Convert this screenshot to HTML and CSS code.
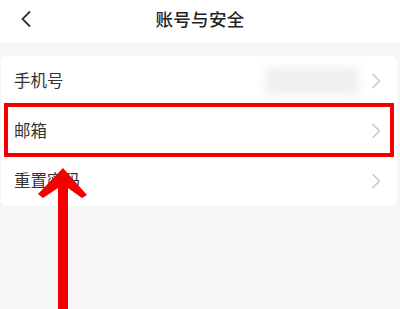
FILE: index.html
```html
<!DOCTYPE html>
<html lang="zh-CN">
<head>
    <meta charset="UTF-8">
    <meta name="viewport" content="width=device-width, initial-scale=1.0">
    <title>账号与安全</title>
    <link rel="stylesheet" href="styles.css">
</head>
<body>
    <div class="header">
        <svg class="back" width="14" height="18" viewBox="0 0 14 18">
            <path d="M11 1.5 L3.5 9 L11 16.5" fill="none" stroke="#333" stroke-width="1.8"/>
        </svg>
        <div class="title">账号与安全</div>
    </div>
    <div class="gap"></div>
    <div class="card">
        <div class="row">
            <span class="label">手机号</span>
            <div class="value">
                <div class="blurred"></div>
                <svg class="arrow-right" width="10" height="16" viewBox="0 0 10 16">
                    <path d="M1.5 1 L8.5 8 L1.5 15" fill="none" stroke="#c4c4c4" stroke-width="1.4"/>
                </svg>
            </div>
        </div>
        <div class="row">
            <span class="label">邮箱</span>
            <div class="value">
                <svg class="arrow-right" width="10" height="16" viewBox="0 0 10 16">
                    <path d="M1.5 1 L8.5 8 L1.5 15" fill="none" stroke="#c4c4c4" stroke-width="1.4"/>
                </svg>
            </div>
        </div>
        <div class="row">
            <span class="label">重置密码</span>
            <div class="value">
                <svg class="arrow-right" width="10" height="16" viewBox="0 0 10 16">
                    <path d="M1.5 1 L8.5 8 L1.5 15" fill="none" stroke="#c4c4c4" stroke-width="1.4"/>
                </svg>
            </div>
        </div>
    </div>

    <!-- annotation overlays -->
    <div class="highlight"></div>
    <svg class="pointer" width="60" height="145" viewBox="0 0 60 145">
        <path d="M33 0 L57 27 L52 30 L38 20 L38 145 L28 145 L28 20 L13 30 L8 26 Z" fill="#f40000"/>
    </svg>
</body>
</html>
```

FILE: styles.css
```css
body {
    margin: 0;
    padding: 0;
    background: #f6f6f6;
    font-family: "Noto Sans CJK SC", "Noto Sans", sans-serif;
    color: #333;
    position: relative;
    height: 309px;
    overflow: hidden;
}
.header {
    height: 42px;
    background: #fff;
    display: flex;
    align-items: center;
    justify-content: center;
    position: relative;
}
.back {
    position: absolute;
    left: 19px;
    top: 10px;
}
.title {
    font-size: 17.5px;
    color: #222;
    font-weight: 500;
    letter-spacing: 0.3px;
    margin-top: -5px;
}
.gap {
    height: 14px;
}
.card {
    background: #fff;
    margin: 0 3px 0 1px;
    border-radius: 6px;
}
.row {
    height: 50px;
    display: flex;
    align-items: center;
    justify-content: space-between;
    padding: 0 16px 0 13px;
}
.label {
    font-size: 16.5px;
    color: #333;
    margin-top: -2px;
}
.value {
    display: flex;
    align-items: center;
}
.blurred {
    width: 94px;
    height: 26px;
    background: #efefef;
    filter: blur(5px);
    margin-right: 12px;
}
.highlight {
    position: absolute;
    left: 4px;
    top: 103px;
    width: 382px;
    height: 46px;
    border: 4px solid #f20000;
}
.pointer {
    position: absolute;
    left: 30px;
    top: 168px;
}
```
